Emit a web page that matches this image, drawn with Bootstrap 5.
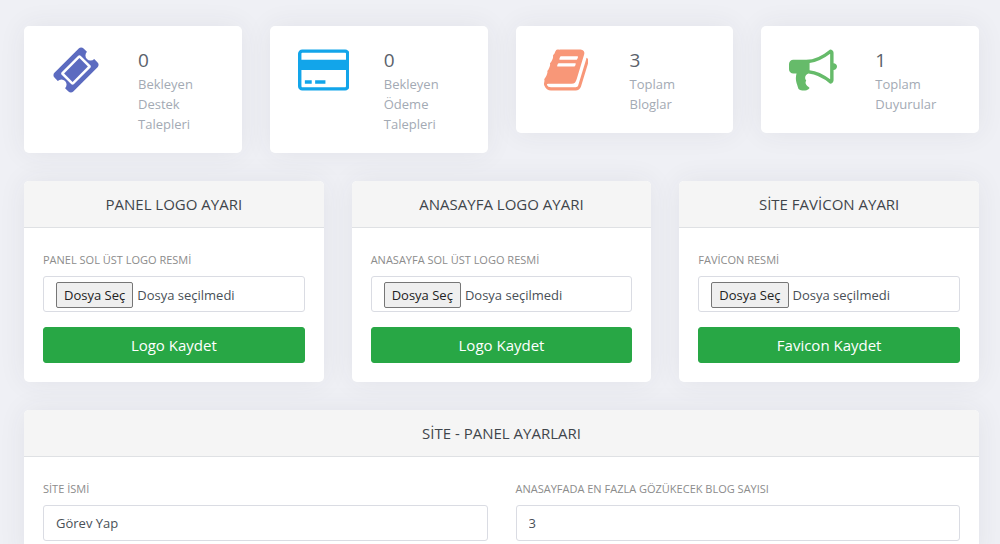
<!DOCTYPE html>
<html lang="tr">
<head>
<meta charset="utf-8">
<meta name="viewport" content="width=device-width, initial-scale=1">
<title>Site - Panel Ayarları</title>
<link href="https://cdn.jsdelivr.net/npm/bootstrap@5.3.0/dist/css/bootstrap.min.css" rel="stylesheet">
<style>
  body { background: #eff0f5; font-family: "Open Sans", sans-serif; font-size: 13px; line-height: 20px; color: #495057; }
  .page { padding: 26px 21px 28px 24px; }
  .row { --bs-gutter-x: 28px; --bs-gutter-y: 28px; }
  .card { border: 0; border-radius: 5px; box-shadow: 0 0 28px rgba(60, 50, 70, .07); }
  .stat { padding: 20px 19px 19px 28px; }
  .stat-icon { flex: 0 0 86px; }
  .stat-icon svg { display: block; height: 48px; }
  .stat-value { font-size: 19px; line-height: 28px; color: #5b626b; }
  .stat-label { color: #a3aab4; }
  .card-header { background: #f5f5f5; border-color: #dfe1e4; padding: 13px 19px; }
  .card-header:first-child { border-radius: 5px 5px 0 0; }
  .card-header h2 { font-size: 15px; line-height: 20px; font-weight: 400; color: #3f454b; margin: 0; }
  .card-body { padding: 23px 19px 19px; }
  .form-label { display: block; font-size: 11px; line-height: 18px; color: #8c8c8c; margin-bottom: 7px; }
  .form-control { height: 36px; padding: 7px 12px; font-size: 13px; line-height: 20px; color: #495057; border: 1px solid #dadce3; border-radius: 3px; }
  .file-box { padding: 6px 12px 4px; margin-bottom: 15px; }
  .file-box input { inset: 0; opacity: 0; cursor: pointer; }
  .file-pick { background: #efefef; border: 1px solid #767676; border-radius: 2px; color: #222; padding: 2px 7px; line-height: 20px; }
  .btn-save { height: 36px; padding: 0 12px; font-size: 15px; line-height: 34px; color: #fff; background: #28a745; border: 1px solid #28a745; border-radius: 3px; }
  .btn-save:hover { background: #218838; color: #fff; }
</style>
</head>
<body>
<main class="page container-fluid">
  <div class="row align-items-start">
    <div class="col-3">
      <div class="card stat flex-row">
        <div class="stat-icon">
          <svg viewBox="0 0 1792 1792" fill="#5c6bc0" aria-hidden="true"><path d="M1024 452l316 316-572 572-316-316zm-211 979l618-618q19-19 19-45t-19-45l-362-362q-18-18-45-18t-45 18l-618 618q-19 19-19 45t19 45l362 362q18 18 45 18t45-18zm889-637l-907 908q-37 37-90.500 37t-90.500-37l-126-126q56-56 56-136t-56-136-136-56-136 56l-125-126q-37-37-37-90.500t37-90.500l907-906q37-37 90.500-37t90.500 37l125 125q-56 56-56 136t56 136 136 56 136-56l126 125q37 37 37 90.500t-37 90.500z"/></svg>
        </div>
        <div><div class="stat-value">0</div><div class="stat-label">Bekleyen Destek Talepleri</div></div>
      </div>
    </div>
    <div class="col-3">
      <div class="card stat flex-row">
        <div class="stat-icon">
          <svg viewBox="0 0 1920 1792" fill="#12a5ea" aria-hidden="true"><path d="M1760 128q66 0 113 47t47 113v1216q0 66-47 113t-113 47h-1600q-66 0-113-47t-47-113v-1216q0-66 47-113t113-47h1600zm-1600 128q-13 0-22.500 9.500t-9.500 22.500v224h1664v-224q0-13-9.500-22.500t-22.500-9.500h-1600zm1600 1280q13 0 22.500-9.500t9.500-22.500v-608h-1664v608q0 13 9.500 22.500t22.500 9.500h1600zm-1504-128v-128h256v128h-256zm384 0v-128h384v128h-384z"/></svg>
        </div>
        <div><div class="stat-value">0</div><div class="stat-label">Bekleyen Ödeme Talepleri</div></div>
      </div>
    </div>
    <div class="col-3">
      <div class="card stat flex-row">
        <div class="stat-icon">
          <svg viewBox="64 0 1664 1792" fill="#f89778" aria-hidden="true"><path d="M1703 478q40 57 18 129l-275 906q-19 64-76.500 107.500t-122.500 43.500h-923q-77 0-148.500-53.500t-99.500-131.500q-24-67-2-127 0-4 3-27t4-37q1-8-3-21.500t-3-19.500q2-11 8-21t16.500-23.500 16.500-23.500q23-38 45-91.500t30-91.500q3-10 .5-30t-.5-28q3-11 17-28t17-23q21-36 42-92t25-90q1-9-2.500-32t.5-28q4-13 22-30.500t22-22.500q19-26 42.500-84.500t27.500-96.500q1-8-3-25.500t-2-26.500q2-8 9-18t18-23 17-21q8-12 16.500-30.500t15-35 16-36 19.500-32 26.500-23.500 36-11.500 47.500 5.500l-1 3q38-9 51-9h761q74 0 114 56t18 130l-274 906q-36 119-71.500 153.500t-128.500 34.500h-869q-27 0-38 15-11 16-1 43 24 70 144 70h923q29 0 56-15.500t35-41.500l300-987q7-22 5-57 38 15 59 43zm-1064 2q-4 13 2 22.500t20 9.500h608q13 0 25.500-9.500t16.500-22.500l21-64q4-13-2-22.500t-20-9.500h-608q-13 0-25.500 9.500t-16.500 22.500zm-83 256q-4 13 2 22.500t20 9.500h608q13 0 25.500-9.500t16.500-22.500l21-64q4-13-2-22.500t-20-9.500h-608q-13 0-25.500 9.500t-16.500 22.500z"/></svg>
        </div>
        <div><div class="stat-value">3</div><div class="stat-label">Toplam Bloglar</div></div>
      </div>
    </div>
    <div class="col-3">
      <div class="card stat flex-row">
        <div class="stat-icon">
          <svg viewBox="0 0 1792 1792" fill="#66bb6a" aria-hidden="true"><path d="M1664 640q53 0 90.500 37.500t37.500 90.500-37.500 90.500-90.500 37.500v384q0 52-38 90t-90 38q-417-347-812-380-58 19-91 66t-31 100.500 40 92.500q-20 33-23 65.500t6 58 33.500 55 48 50 61.500 50.500q-29 58-111.500 83t-168.500 11.500-132-55.500q-7-23-29.500-87.500t-32-94.500-23-89-15-101 3.500-98.500 22-110.500h-122q-66 0-113-47t-47-113v-192q0-66 47-113t113-47h480q435 0 896-384 52 0 90 38t38 90v384zm-128 604v-954q-394 302-768 343v270q377 42 768 341z"/></svg>
        </div>
        <div><div class="stat-value">1</div><div class="stat-label">Toplam Duyurular</div></div>
      </div>
    </div>

    <div class="col-4">
      <form class="card">
        <div class="card-header text-center"><h2>PANEL LOGO AYARI</h2></div>
        <div class="card-body">
          <label class="form-label" for="panelLogo">PANEL SOL ÜST LOGO RESMİ</label>
          <div class="form-control file-box position-relative d-flex align-items-center gap-1">
            <span class="file-pick">Dosya Seç</span><span>Dosya seçilmedi</span>
            <input class="position-absolute w-100 h-100" type="file" id="panelLogo">
          </div>
          <button type="button" class="btn btn-save w-100">Logo Kaydet</button>
        </div>
      </form>
    </div>
    <div class="col-4">
      <form class="card">
        <div class="card-header text-center"><h2>ANASAYFA LOGO AYARI</h2></div>
        <div class="card-body">
          <label class="form-label" for="homeLogo">ANASAYFA SOL ÜST LOGO RESMİ</label>
          <div class="form-control file-box position-relative d-flex align-items-center gap-1">
            <span class="file-pick">Dosya Seç</span><span>Dosya seçilmedi</span>
            <input class="position-absolute w-100 h-100" type="file" id="homeLogo">
          </div>
          <button type="button" class="btn btn-save w-100">Logo Kaydet</button>
        </div>
      </form>
    </div>
    <div class="col-4">
      <form class="card">
        <div class="card-header text-center"><h2>SİTE FAVİCON AYARI</h2></div>
        <div class="card-body">
          <label class="form-label" for="favicon">FAVİCON RESMİ</label>
          <div class="form-control file-box position-relative d-flex align-items-center gap-1">
            <span class="file-pick">Dosya Seç</span><span>Dosya seçilmedi</span>
            <input class="position-absolute w-100 h-100" type="file" id="favicon">
          </div>
          <button type="button" class="btn btn-save w-100">Favicon Kaydet</button>
        </div>
      </form>
    </div>

    <div class="col-12">
      <form class="card">
        <div class="card-header text-center"><h2>SİTE - PANEL AYARLARI</h2></div>
        <div class="card-body">
          <div class="row">
            <div class="col-6">
              <label class="form-label" for="siteName">SİTE İSMİ</label>
              <input class="form-control" type="text" id="siteName" value="Görev Yap">
            </div>
            <div class="col-6">
              <label class="form-label" for="blogCount">ANASAYFADA EN FAZLA GÖZÜKECEK BLOG SAYISI</label>
              <input class="form-control" type="text" id="blogCount" value="3">
            </div>
          </div>
        </div>
      </form>
    </div>
  </div>
</main>
<script src="https://cdn.jsdelivr.net/npm/bootstrap@5.3.0/dist/js/bootstrap.bundle.min.js"></script>
</body>
</html>
